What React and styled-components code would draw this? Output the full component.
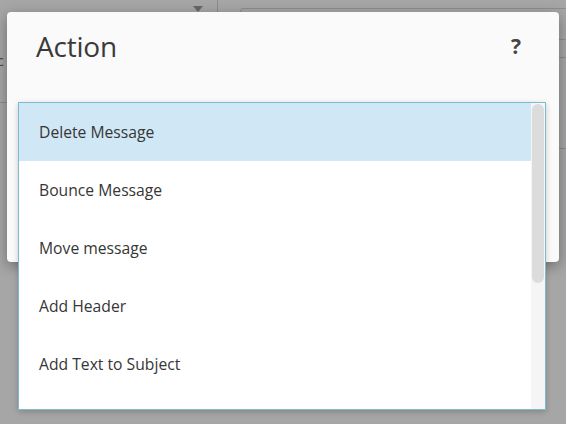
import React from "react";
import styled, { createGlobalStyle } from "styled-components";

const Global = createGlobalStyle`
  html, body { margin: 0; padding: 0; }
  body {
    width: 566px; height: 424px; overflow: hidden;
    background: #a6a6a6;
    font-family: "Open Sans", "Noto Sans", sans-serif;
  }
`;

const Page = styled.div`
  position: relative;
  width: 566px;
  height: 424px;
  overflow: hidden;
`;

const TopBar = styled.div`
  display: flex;
  align-items: flex-start;
  height: 40px;
`;

const Caret = styled.div`
  margin: 6px 0 0 193px;
  width: 0; height: 0;
  border-left: 5px solid transparent;
  border-right: 5px solid transparent;
  border-top: 6px solid #676767;
`;

const Divider = styled.div`
  margin-left: 14px;
  width: 1px;
  height: 14px;
  background: #8c8c8c;
`;

const FieldBox = styled.div`
  margin: 8px 0 0 22px;
  flex: 1;
  height: 30px;
  border: 1px solid #8e8e8e;
  border-right: none;
  border-radius: 4px 0 0 0;
`;

const SideText = styled.div`
  position: absolute;
  left: -3px; top: 51px;
  font-size: 14px;
  color: #444;
`;

const SideRule = styled.div`
  position: absolute;
  left: 0; top: 102px;
  width: 8px; height: 1px;
  background: #8c8c8c;
`;

const RightRule = styled.div`
  position: absolute;
  right: 0; top: ${(p) => p.$top}px;
  width: 8px; height: 1px;
  background: #8c8c8c;
`;

const Dialog = styled.div`
  position: absolute;
  left: 7px; top: 12px;
  width: 552px; height: 250px;
  background: #fafafa;
  border-radius: 4px;
  box-shadow: 0 4px 14px rgba(0,0,0,0.35);
`;

const Header = styled.div`
  display: flex;
  align-items: center;
  justify-content: space-between;
  padding: 14px 38px 0 29px;
  height: 40px;
`;

const Title = styled.h1`
  margin: 0;
  font-size: 28px;
  font-weight: 400;
  color: #3a3a3a;
  letter-spacing: -0.2px;
`;

const Help = styled.span`
  font-size: 21px;
  font-weight: 700;
  color: #444;
`;

const ListBox = styled.div`
  position: absolute;
  left: 18px; top: 102px;
  width: 526px; height: 306px;
  background: #fff;
  border: 1px solid #7dbbd0;
  display: flex;
  overflow: hidden;
  box-shadow: 0 2px 6px rgba(0,0,0,0.2);
`;

const Items = styled.ul`
  list-style: none;
  margin: 0; padding: 0;
  flex: 1;
`;

const Item = styled.li`
  height: 58px;
  display: flex;
  align-items: center;
  padding-left: 20px;
  font-size: 15.7px;
  color: #363636;
  background: ${(p) => (p.$active ? "#d0e7f5" : "#fff")};
`;

const Track = styled.div`
  width: 14px;
  background: #f5f5f5;
  display: flex;
  flex-direction: column;
`;

const Thumb = styled.div`
  margin: 1px 0 0 1px;
  width: 12px;
  height: 179px;
  background: #dcdcdc;
  border-radius: 6px;
`;

const items = [
  "Delete Message",
  "Bounce Message",
  "Move message",
  "Add Header",
  "Add Text to Subject",
];

export default function App() {
  return (
    <Page>
      <Global />
      <TopBar>
        <Caret />
        <Divider />
        <FieldBox />
      </TopBar>
      <SideText>c</SideText>
      <SideRule />
      <RightRule $top={57} />
      <RightRule $top={148} />
      <Dialog>
        <Header>
          <Title>Action</Title>
          <Help>?</Help>
        </Header>
      </Dialog>
      <ListBox>
        <Items>
          {items.map((t, i) => (
            <Item key={t} $active={i === 0}>{t}</Item>
          ))}
        </Items>
        <Track>
          <Thumb />
        </Track>
      </ListBox>
    </Page>
  );
}
